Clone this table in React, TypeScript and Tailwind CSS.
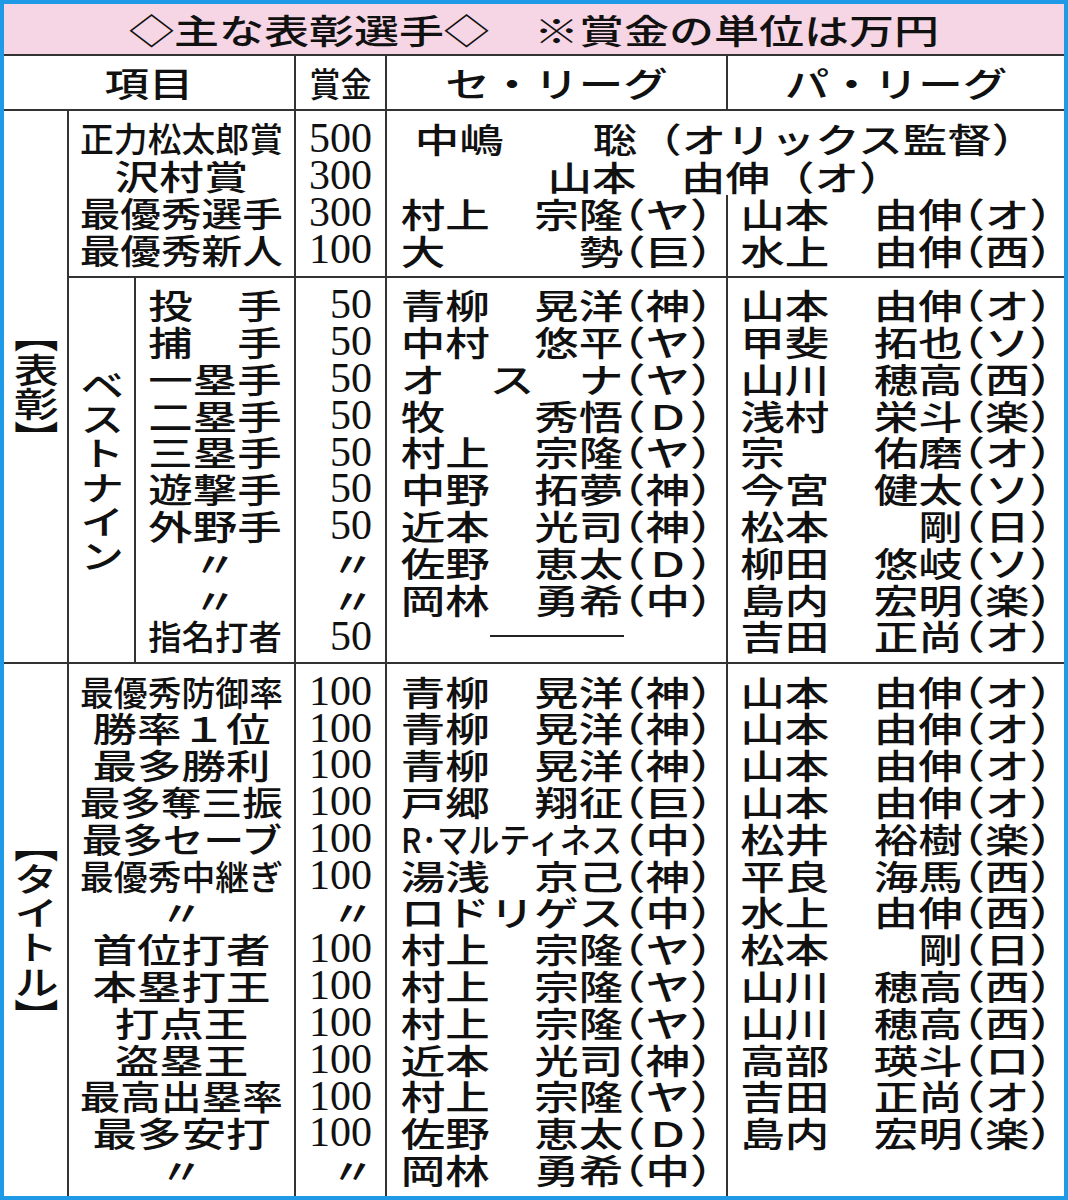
import React from "react";

const R2 = "h-[36.8px]";
const R1 = "h-[37.3px]";

function NameRow({ s, h }: { s: string; h: string }) {
  if (s === "") return <div className={h} />;
  if (s === "-")
    return (
      <div className={`${h} flex items-center justify-center`}>
        <div className="w-[311.5px] shrink-0 flex">
          <div className="ml-[89px] w-[134px] h-[2px] bg-[#222]" />
        </div>
      </div>
    );
  const parts = s.split(" ");
  const team = parts.pop() as string;
  const sq = parts[0].startsWith("!");
  return (
    <div className={`${h} flex items-center justify-center`}>
      <div className="w-[311.5px] shrink-0 flex whitespace-nowrap scale-y-[0.77]">
        <div className="w-[222.5px] shrink-0 flex justify-between">
          {sq ? (
            <span className="inline-block origin-left scale-x-[0.7]">{parts[0].slice(1)}</span>
          ) : (
            parts.map((p, i) => <span key={i}>{p}</span>)
          )}
        </div>
        <span className="[font-feature-settings:'halt']">（{team}）</span>
      </div>
    </div>
  );
}

function Prize({ v, h }: { v: string; h: string }) {
  if (v === "〃")
    return (
      <div className={`${h} flex items-center justify-end pr-[10px]`}>
        <span className="inline-block scale-y-[0.77]">〃</span>
      </div>
    );
  return (
    <div className={`${h} flex items-center justify-end pr-[13px] font-['Liberation_Serif',serif] font-normal text-[42px] leading-none`}>
      {v}
    </div>
  );
}

function Item({ s, sx, h }: { s: string; sx: string; h: string }) {
  return (
    <div className={`${h} flex items-center justify-center`}>
      <span className={`inline-block whitespace-nowrap scale-y-[0.77] ${sx}`}>{s}</span>
    </div>
  );
}

const sec1Items: [string, string][] = [
  ["正力松太郎賞", "scale-x-[0.76]"],
  ["沢村賞", ""],
  ["最優秀選手", "scale-x-[0.912]"],
  ["最優秀新人", "scale-x-[0.912]"],
];
const sec1Prize = ["500", "300", "300", "100"];

const bnItems: string[][] = [
  ["投", "手"],
  ["捕", "手"],
  ["一塁手"],
  ["二塁手"],
  ["三塁手"],
  ["遊撃手"],
  ["外野手"],
  ["〃"],
  ["〃"],
  ["!指名打者"],
];
const bnPrize = ["50", "50", "50", "50", "50", "50", "50", "〃", "〃", "50"];
const bnSe = [
  "青柳 晃洋 神",
  "中村 悠平 ヤ",
  "オ ス ナ ヤ",
  "牧 秀悟 Ｄ",
  "村上 宗隆 ヤ",
  "中野 拓夢 神",
  "近本 光司 神",
  "佐野 恵太 Ｄ",
  "岡林 勇希 中",
  "-",
];
const bnPa = [
  "山本 由伸 オ",
  "甲斐 拓也 ソ",
  "山川 穂高 西",
  "浅村 栄斗 楽",
  "宗 佑磨 オ",
  "今宮 健太 ソ",
  "松本 剛 日",
  "柳田 悠岐 ソ",
  "島内 宏明 楽",
  "吉田 正尚 オ",
];

const tItems: [string, string][] = [
  ["最優秀防御率", "scale-x-[0.76]"],
  ["勝率１位", ""],
  ["最多勝利", ""],
  ["最多奪三振", "scale-x-[0.912]"],
  ["最多セーブ", "scale-x-[0.912]"],
  ["最優秀中継ぎ", "scale-x-[0.76]"],
  ["〃", ""],
  ["首位打者", ""],
  ["本塁打王", ""],
  ["打点王", ""],
  ["盗塁王", ""],
  ["最高出塁率", "scale-x-[0.912]"],
  ["最多安打", ""],
  ["〃", ""],
];
const tPrize = ["100", "100", "100", "100", "100", "100", "〃", "100", "100", "100", "100", "100", "100", "〃"];
const tSe = [
  "青柳 晃洋 神",
  "青柳 晃洋 神",
  "青柳 晃洋 神",
  "戸郷 翔征 巨",
  "!R･マルティネス 中",
  "湯浅 京己 神",
  "ロドリゲス 中",
  "村上 宗隆 ヤ",
  "村上 宗隆 ヤ",
  "村上 宗隆 ヤ",
  "近本 光司 神",
  "村上 宗隆 ヤ",
  "佐野 恵太 Ｄ",
  "岡林 勇希 中",
];
const tPa = [
  "山本 由伸 オ",
  "山本 由伸 オ",
  "山本 由伸 オ",
  "山本 由伸 オ",
  "松井 裕樹 楽",
  "平良 海馬 西",
  "水上 由伸 西",
  "松本 剛 日",
  "山川 穂高 西",
  "山川 穂高 西",
  "高部 瑛斗 ロ",
  "吉田 正尚 オ",
  "島内 宏明 楽",
  "",
];

export default function App() {
  return (
    <div className="w-[1068px] h-[1200px] border-4 border-[#1f9ae6] bg-white flex flex-col font-['Noto_Sans_CJK_JP',sans-serif] font-medium text-[#111] text-[44.5px] leading-none">
      {/* title */}
      <div className="h-[52px] shrink-0 bg-[#f6d5e4] border-b-2 border-[#333] flex items-center justify-center">
        <span className="inline-block whitespace-nowrap text-[45px] scale-y-[0.76]">
          ◇主な表彰選手◇　※賞金の単位は万円
        </span>
      </div>

      <div className="grid grid-cols-[65px_67px_160px_91px_341px_336px] grid-rows-[55px_167px_386px_532px]">
        {/* header */}
        <div className="col-start-1 col-span-3 row-start-1 border-r-2 border-b-2 border-[#333] flex items-center justify-center">
          <span className="inline-block scale-y-[0.77]">項目</span>
        </div>
        <div className="col-start-4 row-start-1 border-r-2 border-b-2 border-[#333] flex items-center justify-center">
          <span className="inline-block whitespace-nowrap scale-y-[0.77] scale-x-[0.7]">賞金</span>
        </div>
        <div className="col-start-5 row-start-1 border-r-2 border-b-2 border-[#333] flex items-center justify-center">
          <span className="inline-block whitespace-nowrap scale-y-[0.77]">セ・リーグ</span>
        </div>
        <div className="col-start-6 row-start-1 border-b-2 border-[#333] flex items-center justify-center">
          <span className="inline-block whitespace-nowrap scale-y-[0.77]">パ・リーグ</span>
        </div>

        {/* 表彰 label */}
        <div className="col-start-1 row-start-2 row-span-2 border-r-2 border-b-2 border-[#333] flex items-center justify-center">
          <span className="inline-block [writing-mode:vertical-rl] [font-feature-settings:'vhal'] scale-y-[0.77]">
            【表彰】
          </span>
        </div>

        {/* section 1 */}
        <div className="col-start-2 col-span-2 row-start-2 border-r-2 border-b-2 border-[#333] flex flex-col justify-center">
          {sec1Items.map(([s, sx], i) => (
            <Item key={i} s={s} sx={sx} h={R1} />
          ))}
        </div>
        <div className="col-start-4 row-start-2 border-r-2 border-b-2 border-[#333] flex flex-col justify-center">
          {sec1Prize.map((v, i) => (
            <Prize key={i} v={v} h={R1} />
          ))}
        </div>
        <div className="col-start-5 col-span-2 row-start-2 border-b-2 border-[#333] flex flex-col pt-[9px]">
          <div className={`${R1} flex items-center justify-center`}>
            <span className="inline-block whitespace-nowrap scale-y-[0.77]">中嶋　　聡（オリックス監督）</span>
          </div>
          <div className={`${R1} flex items-center justify-center`}>
            <span className="inline-block whitespace-nowrap scale-y-[0.77]">山本　由伸（オ）</span>
          </div>
          <div className="flex-1 flex">
            <div className="w-[341px] shrink-0 border-r-2 border-[#333]">
              <NameRow s="村上 宗隆 ヤ" h={R1} />
              <NameRow s="大 勢 巨" h={R1} />
            </div>
            <div className="flex-1">
              <NameRow s="山本 由伸 オ" h={R1} />
              <NameRow s="水上 由伸 西" h={R1} />
            </div>
          </div>
        </div>

        {/* section 2 : best nine */}
        <div className="col-start-2 row-start-3 border-r-2 border-b-2 border-[#333] flex items-center justify-center">
          <span className="inline-block [writing-mode:vertical-rl] scale-y-[0.77]">ベストナイン</span>
        </div>
        <div className="col-start-3 row-start-3 border-r-2 border-b-2 border-[#333] flex flex-col justify-center">
          {bnItems.map((p, i) => (
            <div key={i} className={`${R2} flex items-center justify-center`}>
              {p.length === 2 ? (
                <div className="w-[133.5px] flex justify-between scale-y-[0.77]">
                  <span>{p[0]}</span>
                  <span>{p[1]}</span>
                </div>
              ) : p[0].startsWith("!") ? (
                <span className="inline-block whitespace-nowrap scale-y-[0.77] scale-x-[0.75]">{p[0].slice(1)}</span>
              ) : (
                <span className="inline-block whitespace-nowrap scale-y-[0.77]">{p[0]}</span>
              )}
            </div>
          ))}
        </div>
        <div className="col-start-4 row-start-3 border-r-2 border-b-2 border-[#333] flex flex-col justify-center">
          {bnPrize.map((v, i) => (
            <Prize key={i} v={v} h={R2} />
          ))}
        </div>
        <div className="col-start-5 row-start-3 border-r-2 border-b-2 border-[#333] flex flex-col justify-center">
          {bnSe.map((s, i) => (
            <NameRow key={i} s={s} h={R2} />
          ))}
        </div>
        <div className="col-start-6 row-start-3 border-b-2 border-[#333] flex flex-col justify-center">
          {bnPa.map((s, i) => (
            <NameRow key={i} s={s} h={R2} />
          ))}
        </div>

        {/* section 3 : titles */}
        <div className="col-start-1 row-start-4 border-r-2 border-[#333] flex items-center justify-center">
          <span className="inline-block [writing-mode:vertical-rl] [font-feature-settings:'vhal'] scale-y-[0.77]">
            【タイトル】
          </span>
        </div>
        <div className="col-start-2 col-span-2 row-start-4 border-r-2 border-[#333] flex flex-col justify-center">
          {tItems.map(([s, sx], i) => (
            <Item key={i} s={s} sx={sx} h={R2} />
          ))}
        </div>
        <div className="col-start-4 row-start-4 border-r-2 border-[#333] flex flex-col justify-center">
          {tPrize.map((v, i) => (
            <Prize key={i} v={v} h={R2} />
          ))}
        </div>
        <div className="col-start-5 row-start-4 border-r-2 border-[#333] flex flex-col justify-center">
          {tSe.map((s, i) => (
            <NameRow key={i} s={s} h={R2} />
          ))}
        </div>
        <div className="col-start-6 row-start-4 flex flex-col justify-center">
          {tPa.map((s, i) => (
            <NameRow key={i} s={s} h={R2} />
          ))}
        </div>
      </div>
    </div>
  );
}
